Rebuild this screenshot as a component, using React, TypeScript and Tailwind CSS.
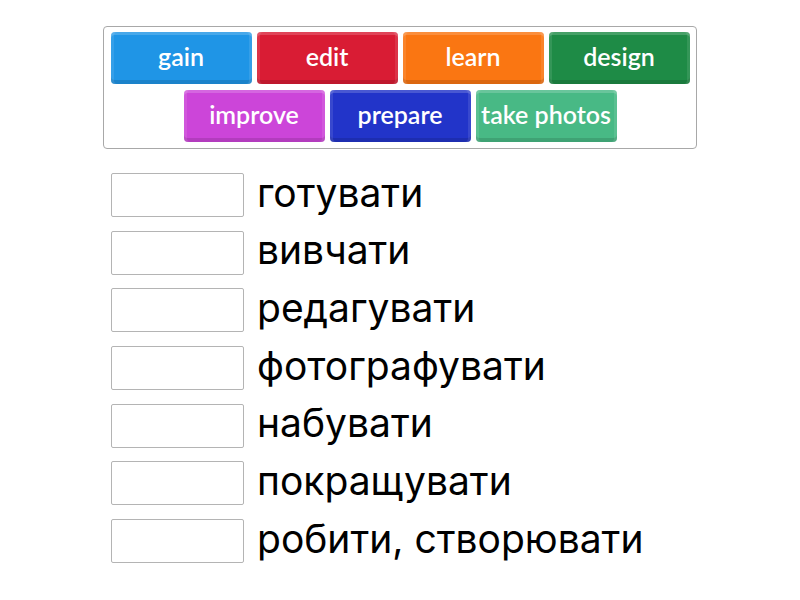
import React from "react";

const tiles = [
  { label: "gain", bg: "bg-[#1f95e6]" },
  { label: "edit", bg: "bg-[#d91c34]" },
  { label: "learn", bg: "bg-[#fa7612]" },
  { label: "design", bg: "bg-[#1e8b46]" },
  { label: "improve", bg: "bg-[#cc45d9]" },
  { label: "prepare", bg: "bg-[#2234c9]" },
  { label: "take photos", bg: "bg-[#48b985]" },
];

const words = [
  "готувати",
  "вивчати",
  "редагувати",
  "фотографувати",
  "набувати",
  "покращувати",
  "робити, створювати",
];

function Tile({ label, bg }: { label: string; bg: string }) {
  return (
    <div
      className={`${bg} w-[141px] h-[52px] rounded-[4px] flex items-center justify-center text-white text-[25px] font-semibold shadow-[inset_0_3px_0_rgba(255,255,255,0.18),inset_3px_0_0_rgba(255,255,255,0.1),inset_-3px_0_0_rgba(255,255,255,0.1),inset_0_-4px_0_rgba(0,0,0,0.12)] pb-[3px] whitespace-nowrap`}
      style={{ fontFamily: "Lato, 'Open Sans', sans-serif" }}
    >
      {label}
    </div>
  );
}

export default function App() {
  return (
    <div className="w-[800px] h-[600px] bg-white pt-[26px]">
      <div className="mx-auto w-[594px] border border-[#a8a8a8] rounded-[4px] px-[6px] pt-[5px] pb-[6px] flex flex-wrap justify-center gap-x-[5px] gap-y-[6px]">
        {tiles.map((t) => (
          <Tile key={t.label} label={t.label} bg={t.bg} />
        ))}
      </div>

      <div className="mt-[24px] ml-[111px] flex flex-col gap-[13.7px]">
        {words.map((w) => (
          <div key={w} className="flex items-center h-[44px]">
            <div className="w-[133px] h-[44px] border border-[#b4b4b4] rounded-[2px] bg-white shrink-0" />
            <span
              className="ml-[13px] text-[39px] text-black leading-none pb-[6px]"
              style={{ fontFamily: "Inter, Roboto, sans-serif" }}
            >
              {w}
            </span>
          </div>
        ))}
      </div>
    </div>
  );
}
